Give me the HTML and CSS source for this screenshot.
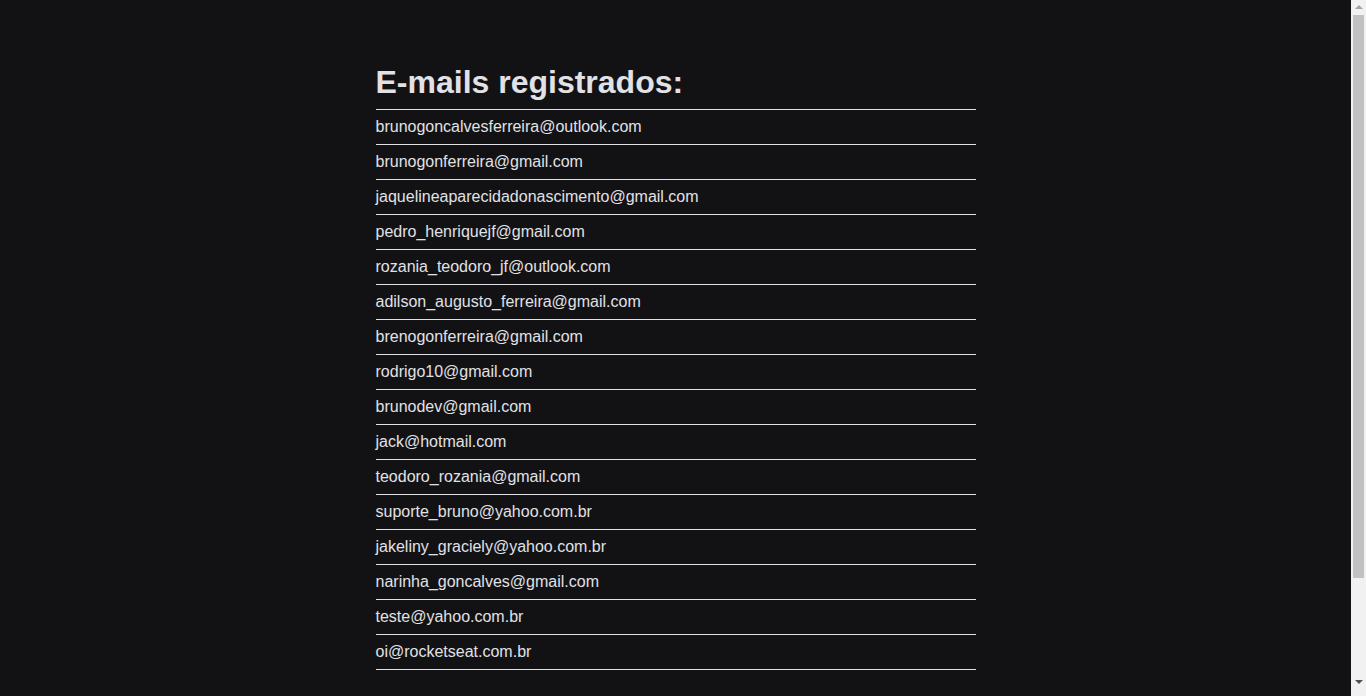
FILE: index.html
```html
<!DOCTYPE html>
<html lang="pt-BR">
<head>
<meta charset="utf-8">
<title>E-mails registrados</title>
<link rel="stylesheet" href="styles.css">
</head>
<body>
<main class="container">
  <h1 class="title">E-mails registrados:</h1>
  <ul class="email-list">
    <li class="email-item">brunogoncalvesferreira@outlook.com</li>
    <li class="email-item">brunogonferreira@gmail.com</li>
    <li class="email-item">jaquelineaparecidadonascimento@gmail.com</li>
    <li class="email-item">pedro_henriquejf@gmail.com</li>
    <li class="email-item">rozania_teodoro_jf@outlook.com</li>
    <li class="email-item">adilson_augusto_ferreira@gmail.com</li>
    <li class="email-item">brenogonferreira@gmail.com</li>
    <li class="email-item">rodrigo10@gmail.com</li>
    <li class="email-item">brunodev@gmail.com</li>
    <li class="email-item">jack@hotmail.com</li>
    <li class="email-item">teodoro_rozania@gmail.com</li>
    <li class="email-item">suporte_bruno@yahoo.com.br</li>
    <li class="email-item">jakeliny_graciely@yahoo.com.br</li>
    <li class="email-item">narinha_goncalves@gmail.com</li>
    <li class="email-item">teste@yahoo.com.br</li>
    <li class="email-item">oi@rocketseat.com.br</li>
  </ul>
</main>
<div class="scrollbar" aria-hidden="true">
  <span class="scroll-arrow scroll-arrow-up"></span>
  <span class="scroll-thumb"></span>
  <span class="scroll-arrow scroll-arrow-down"></span>
</div>
</body>
</html>
```

FILE: styles.css
```css
html, body {
  margin: 0;
  padding: 0;
  background: #121214;
  color: #e1e1e6;
  font-family: "Liberation Sans", Arial, sans-serif;
}

body {
  padding-right: 15px;
}

.container {
  max-width: 600px;
  margin: 0 auto;
  padding: 64px 0 153px;
}

.title {
  margin: 0 0 8px;
  font-size: 32px;
  font-weight: 700;
  line-height: 37px;
}

.email-list {
  list-style: none;
  margin: 0;
  padding: 0;
  border-top: 1px solid #e1e1e6;
}

.email-item {
  font-size: 16px;
  line-height: 18px;
  padding: 8px 0;
  border-bottom: 1px solid #e1e1e6;
}

/* visual replica of the browser scrollbar */
.scrollbar {
  position: fixed;
  top: 0;
  right: 0;
  width: 15px;
  height: 100vh;
  background: #f1f1f1;
  display: flex;
  flex-direction: column;
  align-items: center;
}

.scroll-arrow {
  width: 0;
  height: 0;
  border-left: 4px solid transparent;
  border-right: 4px solid transparent;
}

.scroll-arrow-up {
  margin-top: 5px;
  border-bottom: 4px solid #a3a3a3;
}

.scroll-thumb {
  margin-top: 6px;
  width: 11px;
  height: 563px;
  background: #c1c1c1;
}

.scroll-arrow-down {
  margin-top: auto;
  margin-bottom: 12px;
  border-top: 4px solid #505050;
}
```
